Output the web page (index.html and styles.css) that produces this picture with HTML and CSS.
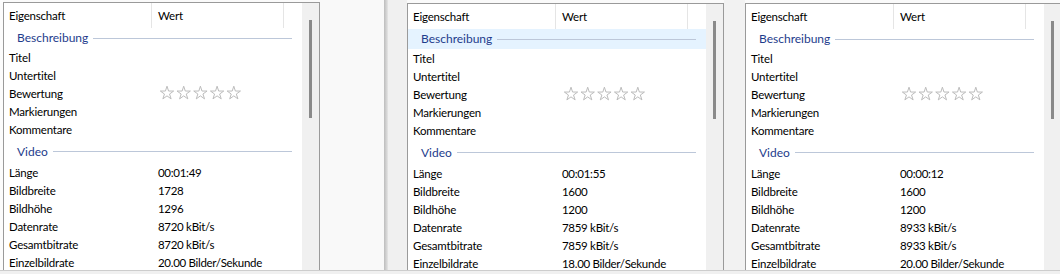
FILE: index.html
```html
<!DOCTYPE html>
<html lang="de">
<head>
<meta charset="utf-8">
<title>Eigenschaften</title>
<link rel="stylesheet" href="styles.css">
</head>
<body>
<div class="screen">
  <div class="stage">
    <div class="edge-left"></div>

    <div class="list">
      <div class="main">
        <div class="header"><div class="hcol c1">Eigenschaft</div><div class="hcol c2">Wert</div><div class="hcol c3"></div></div>
        <div class="group first"><span class="gt">Beschreibung</span><i class="rule"></i></div>
        <div class="row"><span class="k">Titel</span><span class="v"></span></div>
        <div class="row"><span class="k">Untertitel</span><span class="v"></span></div>
        <div class="row"><span class="k">Bewertung</span><span class="v stars"><svg width="84" height="14" viewBox="0 0 84 14"><g class="star"><polygon points="7,0.2 8.57,5.04 13.66,5.04 9.54,8.03 11.12,12.86 7,9.87 2.89,12.86 4.46,8.03 0.34,5.04 5.43,5.04"/></g><g class="star" transform="translate(16.7 0)"><polygon points="7,0.2 8.57,5.04 13.66,5.04 9.54,8.03 11.12,12.86 7,9.87 2.89,12.86 4.46,8.03 0.34,5.04 5.43,5.04"/></g><g class="star" transform="translate(33.4 0)"><polygon points="7,0.2 8.57,5.04 13.66,5.04 9.54,8.03 11.12,12.86 7,9.87 2.89,12.86 4.46,8.03 0.34,5.04 5.43,5.04"/></g><g class="star" transform="translate(50.1 0)"><polygon points="7,0.2 8.57,5.04 13.66,5.04 9.54,8.03 11.12,12.86 7,9.87 2.89,12.86 4.46,8.03 0.34,5.04 5.43,5.04"/></g><g class="star" transform="translate(66.8 0)"><polygon points="7,0.2 8.57,5.04 13.66,5.04 9.54,8.03 11.12,12.86 7,9.87 2.89,12.86 4.46,8.03 0.34,5.04 5.43,5.04"/></g></svg></span></div>
        <div class="row"><span class="k">Markierungen</span><span class="v"></span></div>
        <div class="row"><span class="k">Kommentare</span><span class="v"></span></div>
        <div class="group second"><span class="gt">Video</span><i class="rule"></i></div>
        <div class="row"><span class="k">Länge</span><span class="v">00:01:49</span></div>
        <div class="row"><span class="k">Bildbreite</span><span class="v">1728</span></div>
        <div class="row"><span class="k">Bildhöhe</span><span class="v">1296</span></div>
        <div class="row"><span class="k">Datenrate</span><span class="v">8720 kBit/s</span></div>
        <div class="row"><span class="k">Gesamtbitrate</span><span class="v">8720 kBit/s</span></div>
        <div class="row"><span class="k">Einzelbildrate</span><span class="v">20.00 Bilder/Sekunde</span></div>
      </div>
      <div class="scroll"><div class="thumb"></div></div>
    </div>

    <div class="gap-a"></div>
    <div class="frame-edge"></div>
    <div class="gap-b"></div>

    <div class="list lower">
      <div class="main">
        <div class="header"><div class="hcol c1">Eigenschaft</div><div class="hcol c2">Wert</div><div class="hcol c3"></div></div>
        <div class="group first hover"><span class="gt">Beschreibung</span><i class="rule"></i></div>
        <div class="row"><span class="k">Titel</span><span class="v"></span></div>
        <div class="row"><span class="k">Untertitel</span><span class="v"></span></div>
        <div class="row"><span class="k">Bewertung</span><span class="v stars"><svg width="84" height="14" viewBox="0 0 84 14"><g class="star"><polygon points="7,0.2 8.57,5.04 13.66,5.04 9.54,8.03 11.12,12.86 7,9.87 2.89,12.86 4.46,8.03 0.34,5.04 5.43,5.04"/></g><g class="star" transform="translate(16.7 0)"><polygon points="7,0.2 8.57,5.04 13.66,5.04 9.54,8.03 11.12,12.86 7,9.87 2.89,12.86 4.46,8.03 0.34,5.04 5.43,5.04"/></g><g class="star" transform="translate(33.4 0)"><polygon points="7,0.2 8.57,5.04 13.66,5.04 9.54,8.03 11.12,12.86 7,9.87 2.89,12.86 4.46,8.03 0.34,5.04 5.43,5.04"/></g><g class="star" transform="translate(50.1 0)"><polygon points="7,0.2 8.57,5.04 13.66,5.04 9.54,8.03 11.12,12.86 7,9.87 2.89,12.86 4.46,8.03 0.34,5.04 5.43,5.04"/></g><g class="star" transform="translate(66.8 0)"><polygon points="7,0.2 8.57,5.04 13.66,5.04 9.54,8.03 11.12,12.86 7,9.87 2.89,12.86 4.46,8.03 0.34,5.04 5.43,5.04"/></g></svg></span></div>
        <div class="row"><span class="k">Markierungen</span><span class="v"></span></div>
        <div class="row"><span class="k">Kommentare</span><span class="v"></span></div>
        <div class="group second"><span class="gt">Video</span><i class="rule"></i></div>
        <div class="row"><span class="k">Länge</span><span class="v">00:01:55</span></div>
        <div class="row"><span class="k">Bildbreite</span><span class="v">1600</span></div>
        <div class="row"><span class="k">Bildhöhe</span><span class="v">1200</span></div>
        <div class="row"><span class="k">Datenrate</span><span class="v">7859 kBit/s</span></div>
        <div class="row"><span class="k">Gesamtbitrate</span><span class="v">7859 kBit/s</span></div>
        <div class="row"><span class="k">Einzelbildrate</span><span class="v">18.00 Bilder/Sekunde</span></div>
      </div>
      <div class="scroll"><div class="thumb"></div></div>
    </div>

    <div class="gap-c"></div>

    <div class="list lower">
      <div class="main">
        <div class="header"><div class="hcol c1">Eigenschaft</div><div class="hcol c2">Wert</div><div class="hcol c3"></div></div>
        <div class="group first"><span class="gt">Beschreibung</span><i class="rule"></i></div>
        <div class="row"><span class="k">Titel</span><span class="v"></span></div>
        <div class="row"><span class="k">Untertitel</span><span class="v"></span></div>
        <div class="row"><span class="k">Bewertung</span><span class="v stars"><svg width="84" height="14" viewBox="0 0 84 14"><g class="star"><polygon points="7,0.2 8.57,5.04 13.66,5.04 9.54,8.03 11.12,12.86 7,9.87 2.89,12.86 4.46,8.03 0.34,5.04 5.43,5.04"/></g><g class="star" transform="translate(16.7 0)"><polygon points="7,0.2 8.57,5.04 13.66,5.04 9.54,8.03 11.12,12.86 7,9.87 2.89,12.86 4.46,8.03 0.34,5.04 5.43,5.04"/></g><g class="star" transform="translate(33.4 0)"><polygon points="7,0.2 8.57,5.04 13.66,5.04 9.54,8.03 11.12,12.86 7,9.87 2.89,12.86 4.46,8.03 0.34,5.04 5.43,5.04"/></g><g class="star" transform="translate(50.1 0)"><polygon points="7,0.2 8.57,5.04 13.66,5.04 9.54,8.03 11.12,12.86 7,9.87 2.89,12.86 4.46,8.03 0.34,5.04 5.43,5.04"/></g><g class="star" transform="translate(66.8 0)"><polygon points="7,0.2 8.57,5.04 13.66,5.04 9.54,8.03 11.12,12.86 7,9.87 2.89,12.86 4.46,8.03 0.34,5.04 5.43,5.04"/></g></svg></span></div>
        <div class="row"><span class="k">Markierungen</span><span class="v"></span></div>
        <div class="row"><span class="k">Kommentare</span><span class="v"></span></div>
        <div class="group second"><span class="gt">Video</span><i class="rule"></i></div>
        <div class="row"><span class="k">Länge</span><span class="v">00:00:12</span></div>
        <div class="row"><span class="k">Bildbreite</span><span class="v">1600</span></div>
        <div class="row"><span class="k">Bildhöhe</span><span class="v">1200</span></div>
        <div class="row"><span class="k">Datenrate</span><span class="v">8933 kBit/s</span></div>
        <div class="row"><span class="k">Gesamtbitrate</span><span class="v">8933 kBit/s</span></div>
        <div class="row"><span class="k">Einzelbildrate</span><span class="v">20.00 Bilder/Sekunde</span></div>
      </div>
      <div class="scroll"><div class="thumb"></div></div>
    </div>
  </div>
  <div class="bottom-bar"></div>
</div>
</body>
</html>
```

FILE: styles.css
```css
* { box-sizing: border-box; }
html, body { margin: 0; padding: 0; background: #fafafa; }
body {
  font-family: Lato, "Liberation Sans", sans-serif;
  font-size: 11.5px;
  letter-spacing: -0.2px;
  color: #000;
}
.screen {
  width: 1060px;
  height: 274px;
  display: flex;
  flex-direction: column;
  overflow: hidden;
}
.stage {
  height: 270px;
  display: flex;
  flex-direction: row;
  overflow: hidden;
  flex: none;
}
.edge-left { width: 3px; flex: none; background: #fcfcfc; }
.gap-a { width: 64px; flex: none; background: #f9f9f9; }
.frame-edge {
  width: 4px; flex: none;
  background: linear-gradient(to right, #bdbdbd, #d4d4d4 60%, #e6e6e6);
}
.gap-b { width: 19px; flex: none; background: #f0f0f0; }
.gap-c { width: 21px; flex: none; background: #f2f2f2; }

.list {
  flex: none;
  width: 317px;
  margin-top: 2px;
  border: 1px solid #9a9a9a;
  border-bottom: none;
  background: #fff;
  display: flex;
  flex-direction: row;
  overflow: hidden;
}
.list.lower { margin-top: 3px; }
.main { width: 298px; flex: none; display: flex; flex-direction: column; }
.scroll {
  width: 17px; flex: none;
  background: #f0f0f0;
  display: flex;
  justify-content: center;
}
.thumb {
  width: 3px;
  height: 98px;
  margin-top: 17px;
  margin-left: -1px;
  background: #8a8a8a;
}

.header { height: 25px; display: flex; flex: none; }
.hcol { height: 25px; display: flex; align-items: center; line-height: 1; padding-top: 1px; }
.hcol.c1 { width: 148px; padding-left: 5px; border-right: 1px solid #e5e5e5; }
.hcol.c2 { width: 132px; padding-left: 6px; border-right: 1px solid #e5e5e5; }
.hcol.c3 { flex: 1; }

.group {
  height: 20px;
  display: flex;
  align-items: center;
  padding-left: 13px;
  padding-right: 10px;
  flex: none;
}
.group.second { height: 25px; padding-top: 2px; }
.group.hover { background: #e5f3ff; }
.gt { color: #1e3c8c; font-size: 12px; letter-spacing: 0; line-height: 1; }
.rule { flex: 1; height: 1px; background: #bcc7d9; margin-left: 5px; }

.row { height: 18px; display: flex; align-items: center; flex: none; line-height: 1; padding-top: 1px; }
.k { width: 149px; padding-left: 5px; flex: none; white-space: nowrap; }
.v { padding-left: 5px; white-space: nowrap; letter-spacing: -0.3px; }
.stars { padding-left: 7px; display: flex; align-items: center; margin-top: -1px; }
.stars svg { display: block; }
.star polygon { fill: none; stroke: #bcbcbc; stroke-width: 1; stroke-linejoin: miter; }

.bottom-bar {
  height: 4px;
  flex: none;
  border-top: 1px solid #cdcdcd;
  background: #f0f0f0;
}
```
